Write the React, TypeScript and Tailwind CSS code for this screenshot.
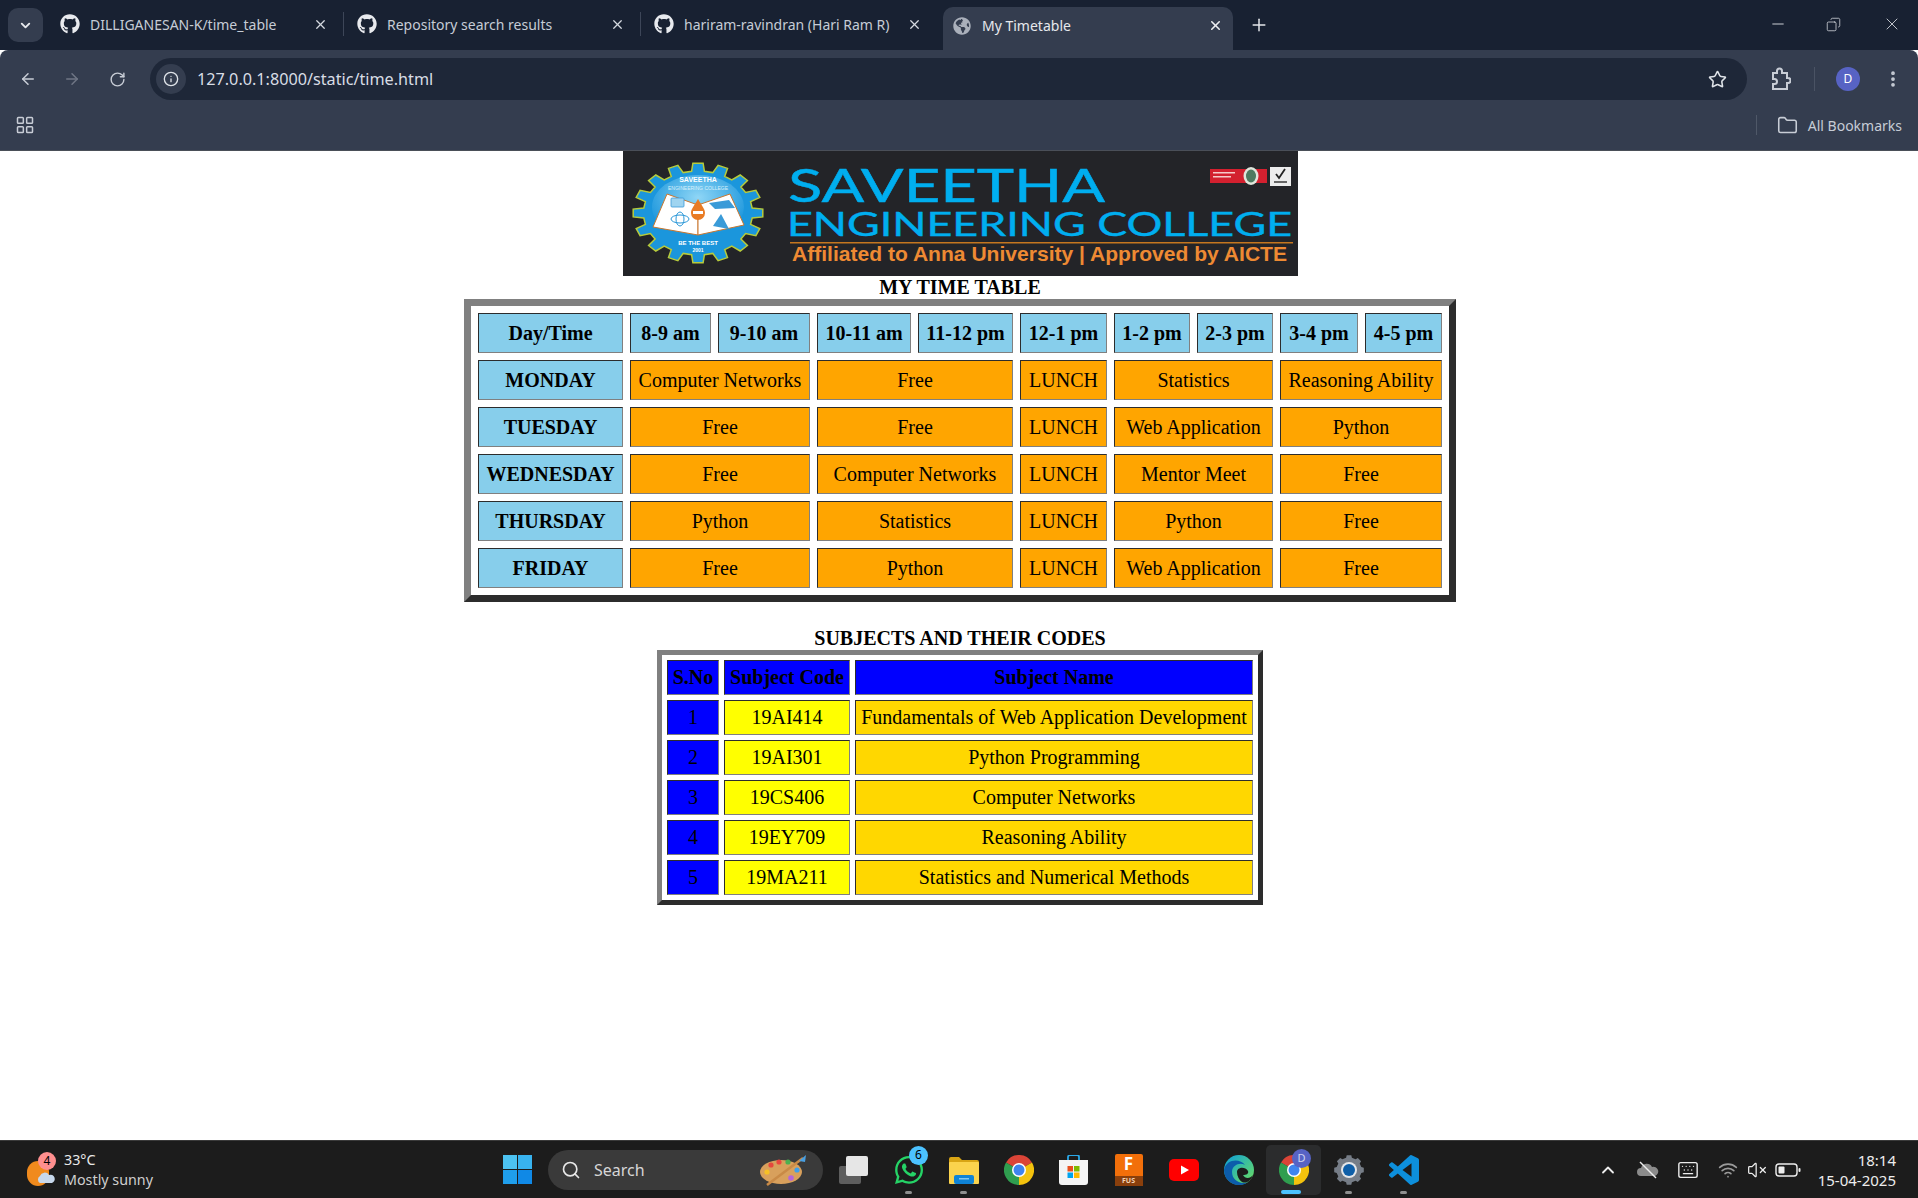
import React from 'react';
import { ArrowLeft, ArrowRight, ChevronDown, ChevronUp, Info, Keyboard, LayoutGrid, Minus, Plus, RotateCw, Search, Star, VolumeX, X, Wifi, Folder, EllipsisVertical, Copy } from 'lucide-react';
import { FaGithub, FaGlobeAmericas, FaWhatsapp } from 'react-icons/fa';

const timeCols = ['8-9 am', '9-10 am', '10-11 am', '11-12 pm', '12-1 pm', '1-2 pm', '2-3 pm', '3-4 pm', '4-5 pm'];

const schedule = [
  { day: 'MONDAY', a: 'Computer Networks', b: 'Free', c: 'Statistics', d: 'Reasoning Ability' },
  { day: 'TUESDAY', a: 'Free', b: 'Free', c: 'Web Application', d: 'Python' },
  { day: 'WEDNESDAY', a: 'Free', b: 'Computer Networks', c: 'Mentor Meet', d: 'Free' },
  { day: 'THURSDAY', a: 'Python', b: 'Statistics', c: 'Python', d: 'Free' },
  { day: 'FRIDAY', a: 'Free', b: 'Python', c: 'Web Application', d: 'Free' },
];

const subjects = [
  ['1', '19AI414', 'Fundamentals of Web Application Development'],
  ['2', '19AI301', 'Python Programming'],
  ['3', '19CS406', 'Computer Networks'],
  ['4', '19EY709', 'Reasoning Ability'],
  ['5', '19MA211', 'Statistics and Numerical Methods'],
];

const cell = 'h-[40px] p-0 text-center border border-[#808080] [border-style:inset]';
const smallCell = 'h-[35px] p-0 text-center border border-[#808080] [border-style:inset]';

const gearPath = (cx: number, cy: number, rx: number, ry: number, teeth: number) => {
  const pts: string[] = [];
  for (let i = 0; i < teeth; i++) {
    const step = (Math.PI * 2) / teeth;
    const a = i * step - Math.PI / 2;
    const offsets: [number, number][] = [[-0.3, 0.84], [-0.2, 1], [0.2, 1], [0.3, 0.84], [0.7, 0.84]];
    offsets.forEach(([o, r]) => {
      pts.push(`${(cx + Math.cos(a + o * step) * rx * r).toFixed(1)},${(cy + Math.sin(a + o * step) * ry * r).toFixed(1)}`);
    });
  }
  return pts.join(' ');
};

const Banner = () => (
  <svg width="675" height="125" viewBox="0 0 675 125" className="block mx-auto">
    <defs>
      <radialGradient id="logoGlow" cx="0.5" cy="0.35" r="0.6">
        <stop offset="0" stopColor="#8fd6f6" />
        <stop offset="1" stopColor="#1b96dc" />
      </radialGradient>
    </defs>
    <rect width="675" height="125" fill="#232428" />
    <polygon points={gearPath(75, 62, 65, 50, 16)} fill="#1b96dc" stroke="#b7cb3c" strokeWidth="1.5" />
    <ellipse cx="75" cy="56" rx="46" ry="32" fill="url(#logoGlow)" />
    <polygon points="30,76 44,43 75,54 75,84" fill="#fff" stroke="#c9772f" strokeWidth="1" />
    <polygon points="75,84 75,54 107,43 121,74" fill="#fff" stroke="#c9772f" strokeWidth="1" />
    <rect x="48" y="47" width="13" height="9" rx="1" fill="#9fd4f0" stroke="#3a9bd8" strokeWidth="0.8" />
    <ellipse cx="57" cy="68" rx="9" ry="4" fill="none" stroke="#2a97d8" strokeWidth="1" />
    <ellipse cx="57" cy="68" rx="4" ry="7" fill="none" stroke="#2a97d8" strokeWidth="1" />
    <polygon points="86,52 106,49 112,57 92,58" fill="#3a9bd8" />
    <polygon points="90,75 98,63 106,78" fill="#3a9bd8" />
    <path d="M75 48 C71 55 68 58 68 62 A7 7 0 0 0 82 62 C82 58 79 55 75 48Z" fill="#e97c25" />
    <rect x="70" y="60" width="10" height="3" fill="#fff" />
    <text x="75" y="31" textAnchor="middle" fontFamily="Liberation Sans" fontWeight="700" fontSize="7" fill="#fff">SAVEETHA</text>
    <text x="75" y="39" textAnchor="middle" fontFamily="Liberation Sans" fontSize="5" fill="#d8f0fb">ENGINEERING COLLEGE</text>
    <text x="75" y="94" textAnchor="middle" fontFamily="Liberation Sans" fontWeight="700" fontSize="6" fill="#fff">BE THE BEST</text>
    <text x="75" y="101" textAnchor="middle" fontFamily="Liberation Sans" fontWeight="700" fontSize="5" fill="#fff">2001</text>
    <text x="165" y="51" textLength="317" lengthAdjust="spacingAndGlyphs" fontFamily="Lato" fontSize="47" fill="#00aeef" stroke="#00aeef" strokeWidth="0.5">SAVEETHA</text>
    <text x="164" y="85" textLength="505" lengthAdjust="spacingAndGlyphs" fontFamily="Lato" fontSize="32" fill="#00aeef" stroke="#00aeef" strokeWidth="0.4">ENGINEERING COLLEGE</text>
    <rect x="167" y="91" width="503" height="1.5" fill="#c4761f" />
    <text x="169" y="110" textLength="495" lengthAdjust="spacingAndGlyphs" fontFamily="Liberation Sans" fontWeight="700" fontSize="21" fill="#ee8a33">Affiliated to Anna University | Approved by AICTE</text>
    <rect x="587" y="18" width="57" height="14" fill="#d3202f" />
    <rect x="590" y="21" width="22" height="1.5" fill="#f5c9c9" />
    <rect x="590" y="25" width="18" height="1.5" fill="#f5c9c9" />
    <ellipse cx="628" cy="25" rx="7.5" ry="9" fill="#dfe6dc" />
    <ellipse cx="628" cy="25" rx="5" ry="6.5" fill="#4d7a60" />
    <rect x="647" y="16" width="21" height="19" fill="#ececec" />
    <path d="M653 23 L656 27 L662 18" fill="none" stroke="#222" strokeWidth="1.8" />
    <rect x="651" y="30" width="13" height="2" fill="#666" />
  </svg>
);

const Tab = ({ title, divider = true }: { title: string; divider?: boolean }) => (
  <div className="relative w-[297px] h-[36px] flex items-center shrink-0">
    <FaGithub className="ml-[10px] w-[20px] h-[20px] text-[#e8eaee] shrink-0" />
    <span className="ml-[10px] w-[215px] whitespace-nowrap text-[#c6ccd6] text-[14px] [font-family:'Noto_Sans',sans-serif]">{title}</span>
    <X className="ml-[8px] w-[15px] h-[15px] text-[#d5d9e0]" strokeWidth={2} />
    {divider && <div className="absolute right-[3px] top-[6px] w-px h-[24px] bg-[#3d4658]" />}
  </div>
);

const ChromeIcon = ({ size = 30 }: { size?: number }) => (
  <svg width={size} height={size} viewBox="0 0 24 24">
    <path d="M12 12 L1.6 6 A12 12 0 0 1 22.4 6 Z" fill="#db4437" />
    <path d="M12 12 L22.4 6 A12 12 0 0 1 12 24 Z" fill="#f4c20d" />
    <path d="M12 12 L12 24 A12 12 0 0 1 1.6 6 Z" fill="#2f9e4f" />
    <circle cx="12" cy="12" r="5.6" fill="#fff" />
    <circle cx="12" cy="12" r="4.4" fill="#3f84ee" />
  </svg>
);

const TaskCell = ({ children, pill, active }: { children: React.ReactNode; pill?: boolean; active?: boolean }) => (
  <div className={`relative w-[55px] h-[50px] flex items-center justify-center shrink-0 rounded-[5px] ${active ? 'bg-[#2b2c2d]' : ''}`}>
    {children}
    {pill && <div className="absolute bottom-[1px] left-[24px] w-[7px] h-[3px] rounded-full bg-[#8f8f8f]" />}
    {active && <div className="absolute bottom-[1px] left-[15px] w-[20px] h-[4px] rounded-full bg-[#4cc2ff]" />}
  </div>
);

export default function App() {
  return (
    <div className="w-[1918px] h-[1198px] flex flex-col overflow-hidden bg-white">
      {/* tab strip */}
      <div className="h-[50px] bg-[#182132] flex items-end shrink-0">
        <div className="ml-[8px] mb-[8px] w-[35px] h-[34px] rounded-[10px] bg-[#343d4f] flex items-center justify-center shrink-0">
          <ChevronDown className="w-[15px] h-[15px] text-[#e8eaee]" strokeWidth={3} />
        </div>
        <div className="ml-[7px] mb-[8px] flex">
          <Tab title="DILLIGANESAN-K/time_table" />
          <Tab title="Repository search results" />
          <Tab title="hariram-ravindran (Hari Ram R)" divider={false} />
        </div>
        <div className="relative ml-[2px] w-[290px] h-[43px] rounded-t-[10px] bg-[#343d4f] flex items-center shrink-0 pb-[6px]">
          <FaGlobeAmericas className="ml-[10px] w-[18px] h-[18px] text-[#aab0bb]" />
          <span className="ml-[11px] w-[226px] text-[#e6e8ec] text-[14px] [font-family:'Noto_Sans',sans-serif]">My Timetable</span>
          <X className="w-[15px] h-[15px] text-[#eceef1]" strokeWidth={2.5} />
        </div>
        <Plus className="ml-[16px] mb-[15px] w-[20px] h-[20px] text-[#e3e6ea]" strokeWidth={1.8} />
        <div className="ml-auto mb-[16px] flex items-center text-[#dfe2e7]">
          <Minus className="w-[18px] h-[18px]" strokeWidth={1.2} />
          <Copy className="ml-[39px] w-[15px] h-[15px] -scale-x-100" strokeWidth={1.2} />
          <X className="ml-[41px] mr-[16px] w-[20px] h-[20px]" strokeWidth={1} />
        </div>
      </div>

      {/* toolbar */}
      <div className="bg-[#343d4f] rounded-t-[8px] h-[101px] shrink-0 border-b border-[#4a4f58]">
        <div className="h-[58px] pt-[8px] flex items-start">
          <div className="w-[150px] h-[42px] flex items-center text-[#c8cdd6] shrink-0">
            <ArrowLeft className="ml-[19px] w-[18px] h-[18px]" strokeWidth={2} />
            <ArrowRight className="ml-[26px] w-[18px] h-[18px] text-[#6f7685]" strokeWidth={2} />
            <RotateCw className="ml-[28px] w-[17px] h-[17px]" strokeWidth={2} />
          </div>
          <div className="w-[1597px] h-[42px] rounded-full bg-[#1e2738] flex items-center shrink-0">
            <div className="ml-[6px] w-[30px] h-[30px] rounded-full bg-[#343d4f] flex items-center justify-center">
              <Info className="w-[16px] h-[16px] text-[#dfe3e8]" strokeWidth={2} />
            </div>
            <span className="ml-[11px] text-[16.2px] text-[#d8dde5] [font-family:'Noto_Sans',sans-serif]">127.0.0.1:8000/static/time.html</span>
            <Star className="ml-auto mr-[20px] w-[19px] h-[19px] text-[#dfe3e8]" strokeWidth={2} />
          </div>
          <div className="h-[42px] flex items-center text-[#c8cdd6]">
            <svg className="ml-[23px]" width="21" height="24" viewBox="0 0 21 24" fill="none" stroke="currentColor" strokeWidth="2">
              <path d="M3 6h4V4a2.5 2.5 0 0 1 5 0v2h5v5h1a2.5 2.5 0 0 1 0 5h-1v6H3v-5h1.5a2.5 2.5 0 0 0 0-5H3z" />
            </svg>
            <div className="ml-[23px] w-px h-[24px] bg-[#4a5364]" />
            <div className="ml-[21px] w-[24px] h-[24px] rounded-full bg-[#5763c4] text-white text-[12px] flex items-center justify-center [font-family:'Noto_Sans',sans-serif]">D</div>
            <EllipsisVertical className="ml-[23px] w-[20px] h-[20px]" strokeWidth={2.5} />
          </div>
        </div>
        <div className="h-[34px] flex items-center">
          <LayoutGrid className="ml-[15px] w-[20px] h-[20px] text-[#c8cdd6]" strokeWidth={1.8} />
          <div className="ml-auto w-px h-[20px] bg-[#4f5868]" />
          <Folder className="ml-[20px] w-[21px] h-[21px] text-[#c8cdd6]" strokeWidth={1.8} />
          <span className="ml-[10px] mr-[16px] text-[14px] text-[#c6ccd6] [font-family:'Noto_Sans',sans-serif]">All Bookmarks</span>
        </div>
      </div>

      {/* page */}
      <main className="flex-1 min-h-0 pl-[2px] text-black [font-family:'Liberation_Serif',serif] text-[20px] leading-[23px]">
        <Banner />
        <div className="text-center font-bold">MY TIME TABLE</div>
        <table className="mx-auto w-[992px] table-fixed border-separate border-spacing-[7px] border-[7px] border-[#808080] [border-style:outset]">
          <colgroup>
            {/* column widths read off the reference */}
            <col className="w-[145px]" />
            <col className="w-[81px]" />
            <col className="w-[92px]" />
            <col className="w-[94px]" />
            <col className="w-[95px]" />
            <col className="w-[87px]" />
            <col className="w-[76px]" />
            <col className="w-[76px]" />
            <col className="w-[78px]" />
            <col className="w-[77px]" />
          </colgroup>
          <tbody>
            <tr>
              <th className={`${cell} bg-[#87ceeb]`}>Day/Time</th>
              {timeCols.map((t) => (
                <th key={t} className={`${cell} bg-[#87ceeb]`}>{t}</th>
              ))}
            </tr>
            {schedule.map((row) => (
              <tr key={row.day}>
                <th className={`${cell} bg-[#87ceeb]`}>{row.day}</th>
                <td colSpan={2} className={`${cell} bg-[#ffa500]`}>{row.a}</td>
                <td colSpan={2} className={`${cell} bg-[#ffa500]`}>{row.b}</td>
                <td className={`${cell} bg-[#ffa500]`}>LUNCH</td>
                <td colSpan={2} className={`${cell} bg-[#ffa500]`}>{row.c}</td>
                <td colSpan={2} className={`${cell} bg-[#ffa500]`}>{row.d}</td>
              </tr>
            ))}
          </tbody>
        </table>

        <div className="mt-[25px] text-center font-bold">SUBJECTS AND THEIR CODES</div>
        <table className="mx-auto w-[606px] table-fixed border-separate border-spacing-[5px] border-[5px] border-[#808080] [border-style:outset]">
          <colgroup>
            <col className="w-[52px]" />
            <col className="w-[126px]" />
            <col className="w-[398px]" />
          </colgroup>
          <tbody>
            <tr>
              <th className={`${smallCell} bg-[#0000ff]`}>S.No</th>
              <th className={`${smallCell} bg-[#0000ff]`}>Subject Code</th>
              <th className={`${smallCell} bg-[#0000ff]`}>Subject Name</th>
            </tr>
            {subjects.map(([no, code, name]) => (
              <tr key={no}>
                <td className={`${smallCell} bg-[#0000ff]`}>{no}</td>
                <td className={`${smallCell} bg-[#ffff00]`}>{code}</td>
                <td className={`${smallCell} bg-[#ffd700]`}>{name}</td>
              </tr>
            ))}
          </tbody>
        </table>
      </main>

      {/* taskbar */}
      <div className="h-[58px] shrink-0 bg-[#1c1c1c] border-t border-[#3a3a3a] flex items-center [font-family:'Noto_Sans',sans-serif]">
        <div className="w-[503px] pl-[27px] flex items-center shrink-0">
          <div className="relative w-[30px] h-[34px] shrink-0">
            <div className="absolute left-0 top-[8px] w-[22px] h-[25px] rounded-full bg-[#f08a1d]" />
            <svg className="absolute left-[9px] top-[18px]" width="20" height="13" viewBox="0 0 20 13">
              <path d="M4 12 a4 4 0 0 1 0-7 a5 5 0 0 1 9-1 a4 4 0 0 1 3 8Z" fill="#c7d8ec" />
            </svg>
            <div className="absolute left-[11px] -top-[1px] w-[18px] h-[18px] rounded-full bg-[#ff8f8f] text-black text-[12px] flex items-center justify-center">4</div>
          </div>
          <div className="ml-[7px] text-[#e9e9e9] text-[14.3px] leading-[20px]">
            <div>33°C</div>
            <div className="text-[#cfcfcf]">Mostly sunny</div>
          </div>
        </div>
        <svg width="29" height="29" viewBox="0 0 29 29" className="shrink-0">
          <rect width="14" height="14" fill="#4cc2f1" />
          <rect x="15" width="14" height="14" fill="#38b3ef" />
          <rect y="15" width="14" height="14" fill="#1f9eeb" />
          <rect x="15" y="15" width="14" height="14" fill="#1089e6" />
        </svg>
        <div className="ml-[16px] w-[275px] h-[40px] rounded-full bg-[#3a3a3a] flex items-center shrink-0">
          <Search className="ml-[13px] w-[20px] h-[20px] text-[#e8e8e8]" strokeWidth={2} />
          <span className="ml-[13px] text-[16px] text-[#d6d6d6]">Search</span>
          <svg className="ml-auto mr-[14px]" width="50" height="32" viewBox="0 0 50 32">
            <ellipse cx="22" cy="18" rx="21" ry="12" fill="#d8a05c" />
            <circle cx="12" cy="11" r="2.6" fill="#e5483d" />
            <circle cx="20" cy="8" r="2.6" fill="#e8473f" />
            <circle cx="29" cy="8" r="2.6" fill="#4caf50" />
            <circle cx="8" cy="18" r="2.6" fill="#f6c026" />
            <circle cx="38" cy="16" r="2.6" fill="#3f9fe8" />
            <circle cx="32" cy="24" r="2.8" fill="#b565d8" />
            <path d="M8 31 L44 4" stroke="#c98a46" strokeWidth="2.5" />
            <path d="M40 7 L47 1 L46 8 Z" fill="#4a9fe0" />
          </svg>
        </div>
        <div className="ml-[3px] flex shrink-0">
          <TaskCell>
            <div className="relative w-[30px] h-[28px]">
              <div className="absolute left-0 bottom-0 w-[22px] h-[18px] rounded-[2px] bg-[#5e5e5e]" />
              <div className="absolute right-[1px] top-0 w-[22px] h-[20px] rounded-[2px] bg-[#e6e6e6]" />
            </div>
          </TaskCell>
          <TaskCell pill>
            <FaWhatsapp className="w-[32px] h-[32px] text-[#25d366]" />
            <div className="absolute left-[28px] top-[1px] w-[19px] h-[19px] rounded-full bg-[#4cc2ff] text-black text-[12px] flex items-center justify-center">6</div>
          </TaskCell>
          <TaskCell pill>
            <svg width="30" height="28" viewBox="0 0 30 28">
              <path d="M0 3 a2 2 0 0 1 2-2 h8 l3 3 h15 a2 2 0 0 1 2 2 v4 H0Z" fill="#d9a514" />
              <rect y="6" width="30" height="22" rx="1" fill="#fbd34d" />
              <rect x="5" y="19" width="20" height="9" rx="2" fill="#0f83d6" />
              <rect x="10" y="22" width="10" height="1.5" fill="#7fc6f2" />
            </svg>
          </TaskCell>
          <TaskCell>
            <ChromeIcon />
          </TaskCell>
          <TaskCell>
            <svg width="29" height="30" viewBox="0 0 29 30">
              <path d="M9 6 V2 A2 2 0 0 1 11 0 H18 A2 2 0 0 1 20 2 V6" fill="none" stroke="#2aa7e6" strokeWidth="1.8" />
              <path d="M0 5 H29 V27 A3 3 0 0 1 26 30 H3 A3 3 0 0 1 0 27Z" fill="#f4f4f4" />
              <rect x="8.5" y="11" width="5.5" height="5.5" fill="#e8501f" />
              <rect x="15" y="11" width="5.5" height="5.5" fill="#7fba00" />
              <rect x="8.5" y="17.5" width="5.5" height="5.5" fill="#00a4ef" />
              <rect x="15" y="17.5" width="5.5" height="5.5" fill="#ffb900" />
            </svg>
          </TaskCell>
          <TaskCell>
            <div className="relative w-[28px] h-[32px] rounded-[2px] bg-[#f26f0a] text-center">
              <span className="block text-white font-bold text-[17px] leading-[20px]">F</span>
              <div className="absolute left-0 right-0 bottom-0 h-[10px] bg-[#8a3f0c] text-[#f3d3b5] font-bold text-[7px] leading-[10px]">FUS</div>
            </div>
          </TaskCell>
          <TaskCell>
            <svg width="30" height="22" viewBox="0 0 30 22">
              <rect width="30" height="22" rx="5" fill="#ff0000" />
              <path d="M12 6.5 L20 11 L12 15.5Z" fill="#fff" />
            </svg>
          </TaskCell>
          <TaskCell>
            <svg width="30" height="30" viewBox="0 0 30 30">
              <defs>
                <linearGradient id="edgeTop" x1="0" y1="0" x2="1" y2="1">
                  <stop offset="0" stopColor="#0c9fdc" />
                  <stop offset="1" stopColor="#6fe05a" />
                </linearGradient>
              </defs>
              <circle cx="15" cy="15" r="15" fill="url(#edgeTop)" />
              <path d="M0 15 A15 15 0 0 0 24 27 C16 30 8 25 8 17 C8 10 16 7 21 10 C16 3 2 4 0 15Z" fill="#0c5cab" />
              <path d="M13 17 C13 12 21 11 24 16 C25 19 22 20 19 20 C21 24 26 24 29 20 C27 26 22 29 18 27 C15 25 13 21 13 17Z" fill="#1c1c1c" />
            </svg>
          </TaskCell>
          <TaskCell active>
            <ChromeIcon />
            <div className="absolute left-[26px] top-[4px] w-[19px] h-[19px] rounded-full bg-[#5763c4] text-[#cfd3f2] text-[11px] flex items-center justify-center">D</div>
          </TaskCell>
          <TaskCell pill>
            <svg width="30" height="30" viewBox="0 0 30 30">
              <polygon points={gearPath(15, 15, 15, 15, 8)} fill="#767d87" />
              <circle cx="15" cy="15" r="8" fill="#e4e6e9" />
              <circle cx="15" cy="15" r="6" fill="#0f5fa8" />
            </svg>
          </TaskCell>
          <TaskCell pill>
            <svg width="30" height="30" viewBox="0 0 24 24">
              <path fill="#0d8fdc" d="M23.15 2.587L18.21.21a1.494 1.494 0 0 0-1.705.29l-9.46 8.63-4.12-3.128a.999.999 0 0 0-1.276.057L.327 7.261A1 1 0 0 0 .326 8.74L3.899 12 .326 15.26a1 1 0 0 0 .001 1.479L1.65 17.94a.999.999 0 0 0 1.276.057l4.12-3.128 9.46 8.63a1.492 1.492 0 0 0 1.704.29l4.942-2.377A1.5 1.5 0 0 0 24 20.06V3.939a1.5 1.5 0 0 0-.85-1.352zm-5.146 14.861L10.826 12l7.178-5.448v10.896z" />
            </svg>
          </TaskCell>
        </div>
        <div className="ml-auto w-[330px] pr-[22px] flex items-center text-[#ededed] shrink-0">
          <div className="w-[40px] flex justify-center"><ChevronUp className="w-[20px] h-[20px]" strokeWidth={2.2} /></div>
          <div className="w-[40px] flex justify-center">
            <svg width="22" height="18" viewBox="0 0 22 18">
              <path d="M4 15 a4 4 0 0 1 0-8 a6 6 0 0 1 11-1 a4.5 4.5 0 0 1 3 9Z" fill="#8b8b8b" />
              <path d="M3 1 L19 17" stroke="#ededed" strokeWidth="1.5" />
            </svg>
          </div>
          <div className="w-[40px] flex justify-center"><Keyboard className="w-[22px] h-[22px]" strokeWidth={1.5} /></div>
          <div className="w-[40px] flex justify-center"><Wifi className="w-[20px] h-[20px] text-[#9a9a9a]" strokeWidth={2} /></div>
          <div className="w-[18px] flex justify-center"><VolumeX className="w-[20px] h-[20px] shrink-0" strokeWidth={1.5} /></div>
          <svg className="ml-[9px]" width="26" height="14" viewBox="0 0 26 14">
            <rect x="1" y="1" width="21" height="12" rx="3" fill="none" stroke="#ededed" strokeWidth="1.4" />
            <rect x="3.5" y="3.5" width="6" height="7" rx="1" fill="#ededed" />
            <rect x="23.5" y="5" width="2" height="4" rx="1" fill="#ededed" />
          </svg>
          <div className="ml-auto text-right text-[15px] leading-[20px]">
            <div>18:14</div>
            <div>15-04-2025</div>
          </div>
        </div>
      </div>
    </div>
  );
}
